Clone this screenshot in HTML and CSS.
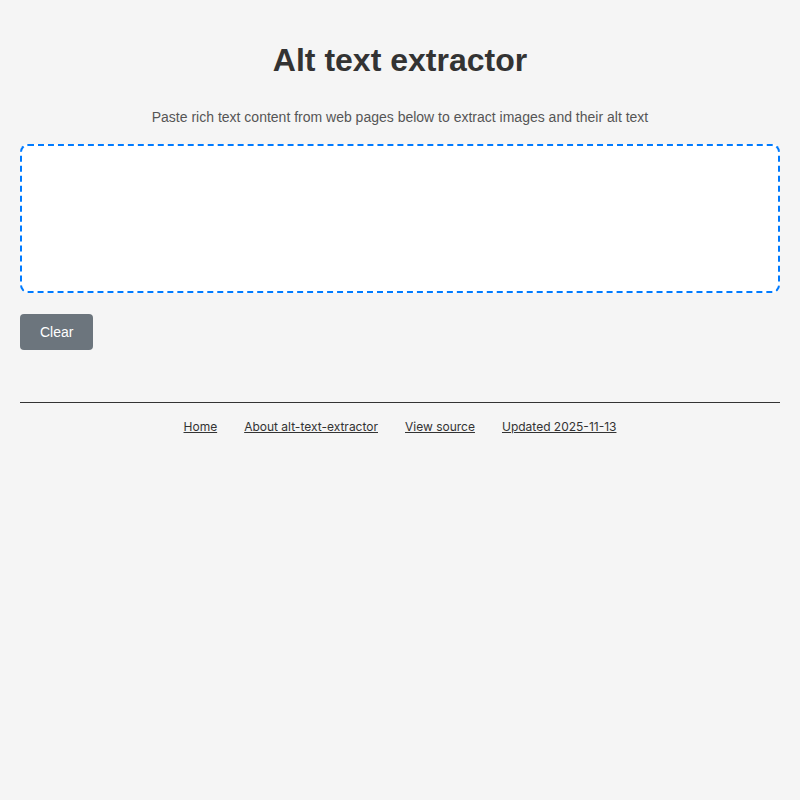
FILE: index.html
```html
<!DOCTYPE html>
<html lang="en">
<head>
<meta charset="utf-8">
<title>Alt text extractor</title>
<link rel="stylesheet" href="styles.css">
</head>
<body>
<main class="page">
  <h1 class="title">Alt text extractor</h1>
  <p class="intro">Paste rich text content from web pages below to extract images and their alt text</p>
  <div class="paste-area" contenteditable="true"></div>
  <div class="actions">
    <button class="btn-clear" type="button">Clear</button>
  </div>
  <footer class="site-footer">
    <a href="#">Home</a>
    <a href="#">About alt-text-extractor</a>
    <a href="#">View source</a>
    <a href="#">Updated 2025-11-13</a>
  </footer>
</main>
</body>
</html>
```
FILE: styles.css
```css
html, body {
  margin: 0;
  padding: 0;
  background: #f5f5f5;
}
body {
  font-family: "Liberation Sans", Arial, sans-serif;
  color: #333;
}
.page {
  padding: 20px;
}
.title {
  margin: 22px 0 0;
  font-size: 32px;
  line-height: 37px;
  font-weight: bold;
  text-align: center;
  color: #333;
}
.intro {
  margin: 29px 0 0;
  font-size: 14px;
  line-height: 18px;
  text-align: center;
  color: #555;
}
.paste-area {
  margin-top: 18px;
  height: 145px;
  background: #fff;
  border: 2px dashed #007bff;
  border-radius: 8px;
  outline: none;
}
.actions {
  margin-top: 21px;
}
.btn-clear {
  background: #6c757d;
  color: #fff;
  border: none;
  border-radius: 4px;
  font-family: "Liberation Sans", Arial, sans-serif;
  font-size: 14px;
  padding: 0 20px;
  height: 36px;
  cursor: pointer;
}
.site-footer {
  margin-top: 52px;
  border-top: 1px solid #333;
  padding-top: 16px;
  display: flex;
  justify-content: center;
  gap: 27px;
  font-family: Inter, "Noto Sans", sans-serif;
  font-size: 12px;
  line-height: 16px;
}
.site-footer a {
  color: #333;
  text-decoration: underline;
}
```
